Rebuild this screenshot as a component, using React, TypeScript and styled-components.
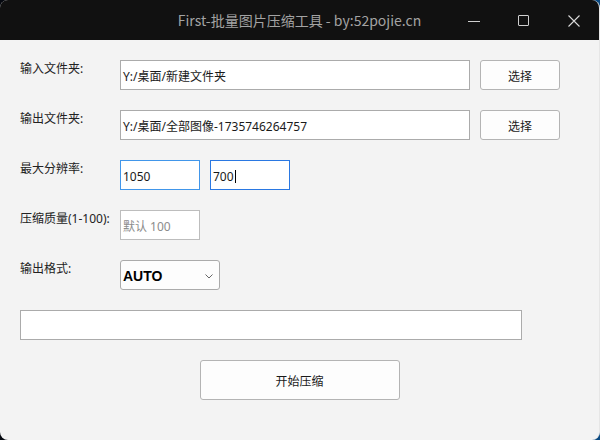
import React from "react";
import styled, { createGlobalStyle } from "styled-components";

const Global = createGlobalStyle`
  html, body { margin: 0; padding: 0; }
  body {
    width: 600px; height: 440px; overflow: hidden;
    background: linear-gradient(90deg, #05080f 0%, #0a1a30 60%, #0b4a82 100%);
    font-family: "Noto Sans CJK SC", "Noto Sans", sans-serif;
  }
  * { box-sizing: border-box; }
`;

const Window = styled.div`
  width: 600px;
  height: 440px;
  border-radius: 8px;
  overflow: hidden;
  display: flex;
  flex-direction: column;
  background: #f3f3f3;
  border-right: 1px solid #e6e6e6;
`;

const TitleBar = styled.div`
  height: 40px;
  flex: none;
  background: #111111;
  display: grid;
  grid-template-columns: 1fr auto 1fr;
  align-items: center;
`;

const Title = styled.div`
  grid-column: 2;
  color: #a3a3a3;
  font-size: 14px;
  line-height: 40px;
  padding-bottom: 1px;
  white-space: nowrap;
`;

const Controls = styled.div`
  grid-column: 3;
  justify-self: end;
  display: flex;
  height: 40px;
`;

const CtrlBtn = styled.div`
  width: 50px;
  height: 40px;
  display: flex;
  align-items: center;
  justify-content: center;
`;

const Content = styled.div`
  flex: 1;
  padding: 20px 20px 0 20px;
  display: flex;
  flex-direction: column;
  gap: 20px;
`;

const Row = styled.div`
  display: flex;
  align-items: flex-start;
  height: 30px;
`;

const Label = styled.div`
  width: 100px;
  flex: none;
  font-family: "Noto Sans", "Noto Sans CJK SC", sans-serif;
  font-size: 12px;
  line-height: 16px;
  padding-top: 1px;
  color: #222;
  white-space: nowrap;
`;

const Field = styled.div<{ $w: number; $border?: string; $ml?: number; $muted?: boolean }>`
  width: ${(p) => p.$w}px;
  height: 30px;
  margin-left: ${(p) => p.$ml ?? 0}px;
  flex: none;
  background: #fff;
  border: 1px solid ${(p) => p.$border ?? "#ababab"};
  display: flex;
  align-items: center;
  padding: 2px 0 0 2px;
  font-family: "Noto Sans", "Noto Sans CJK SC", sans-serif;
  font-size: 12px;
  color: ${(p) => (p.$muted ? "#8c8c8c" : "#1a1a1a")};
  white-space: nowrap;
  overflow: hidden;
`;

const Caret = styled.span`
  display: inline-block;
  width: 1px;
  height: 13px;
  background: #000;
  margin-left: 1px;
`;

const Btn = styled.div<{ $w: number; $h: number; $ml?: number }>`
  width: ${(p) => p.$w}px;
  height: ${(p) => p.$h}px;
  margin-left: ${(p) => p.$ml ?? 0}px;
  flex: none;
  background: #fdfdfd;
  border: 1px solid #b4b4b4;
  border-radius: 3px;
  display: flex;
  align-items: center;
  justify-content: center;
  font-size: 12px;
  color: #1a1a1a;
`;

const Select = styled.div`
  width: 100px;
  height: 30px;
  flex: none;
  background: #fdfdfd;
  border: 1px solid #ababab;
  border-radius: 3px;
  display: flex;
  align-items: center;
  justify-content: space-between;
  padding: 2px 6px 0 2px;
  font-family: "Liberation Sans", Arial, sans-serif;
  font-weight: bold;
  font-size: 14px;
  color: #000;
`;

const WideBox = styled.div`
  width: 502px;
  height: 30px;
  background: #fff;
  border: 1px solid #ababab;
`;

const StartRow = styled.div`
  display: flex;
  justify-content: center;
`;

export default function App() {
  return (
    <>
      <Global />
      <Window>
        <TitleBar>
          <Title>First-批量图片压缩工具 - by:52pojie.cn</Title>
          <Controls>
            <CtrlBtn>
              <svg width="14" height="14" viewBox="0 0 14 14">
                <line x1="1" y1="7.5" x2="13" y2="7.5" stroke="#cfcfcf" strokeWidth="1" />
              </svg>
            </CtrlBtn>
            <CtrlBtn>
              <svg width="12" height="12" viewBox="0 0 12 12">
                <rect x="0.5" y="0.5" width="10" height="10" rx="0.5" fill="none" stroke="#cfcfcf" strokeWidth="1" />
              </svg>
            </CtrlBtn>
            <CtrlBtn>
              <svg width="12" height="12" viewBox="0 0 12 12">
                <path d="M0.5 0.5 L11.5 11.5 M11.5 0.5 L0.5 11.5" stroke="#d8d8d8" strokeWidth="1.1" />
              </svg>
            </CtrlBtn>
          </Controls>
        </TitleBar>
        <Content>
          <Row>
            <Label>输入文件夹:</Label>
            <Field $w={350}>Y:/桌面/新建文件夹</Field>
            <Btn $w={80} $h={30} $ml={10}>选择</Btn>
          </Row>
          <Row>
            <Label>输出文件夹:</Label>
            <Field $w={350}>Y:/桌面/全部图像-1735746264757</Field>
            <Btn $w={80} $h={30} $ml={10}>选择</Btn>
          </Row>
          <Row>
            <Label>最大分辨率:</Label>
            <Field $w={80} $border="#4196ea">1050</Field>
            <Field $w={80} $ml={10} $border="#2a78e2">
              700<Caret />
            </Field>
          </Row>
          <Row>
            <Label>压缩质量(1-100):</Label>
            <Field $w={80} $border="#bdbdbd" $muted>默认 100</Field>
          </Row>
          <Row>
            <Label>输出格式:</Label>
            <Select>
              <span>AUTO</span>
              <svg width="8" height="5" viewBox="0 0 8 5">
                <path d="M0.5 0.5 L4 4 L7.5 0.5" fill="none" stroke="#555" strokeWidth="0.9" />
              </svg>
            </Select>
          </Row>
          <WideBox />
          <StartRow>
            <Btn $w={200} $h={40}>开始压缩</Btn>
          </StartRow>
        </Content>
      </Window>
    </>
  );
}
